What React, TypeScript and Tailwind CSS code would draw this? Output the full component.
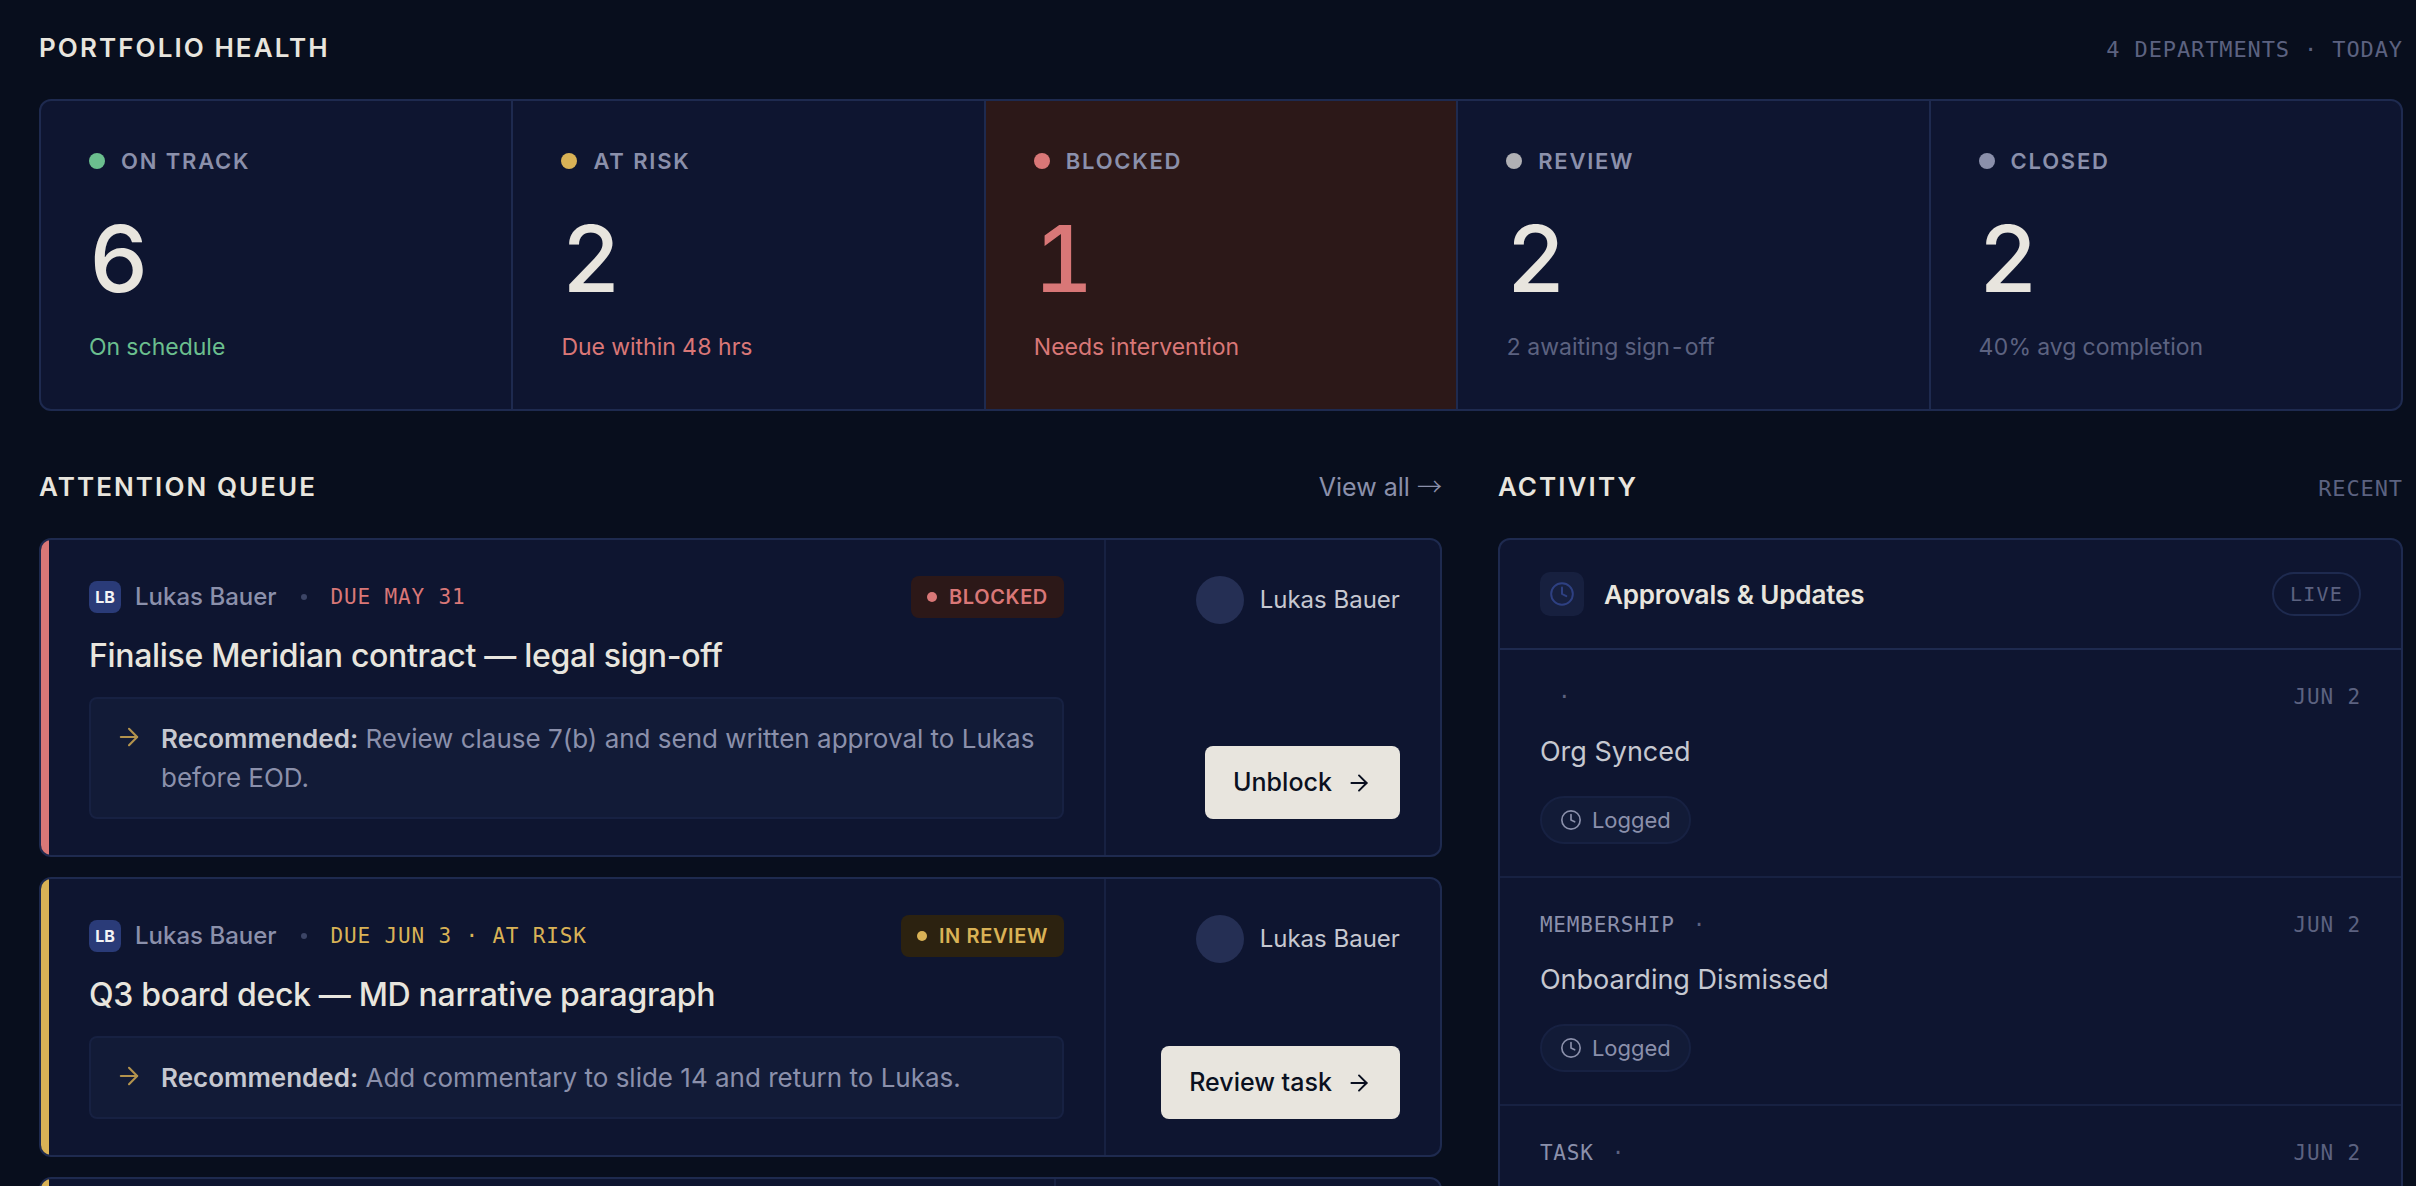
import { ArrowRight, Clock } from 'lucide-react';
import type { ReactNode } from 'react';

const HEALTH = [
  { label: 'On track', value: 6, note: 'On schedule', dot: 'bg-[#6bbf8e]', noteColor: 'text-[#6bbf8e]' },
  { label: 'At risk', value: 2, note: 'Due within 48 hrs', dot: 'bg-[#d9b256]', noteColor: 'text-[#d97777]' },
  { label: 'Blocked', value: 1, note: 'Needs intervention', dot: 'bg-[#d97777]', noteColor: 'text-[#d97777]', blocked: true },
  { label: 'Review', value: 2, note: '2 awaiting sign-off', dot: 'bg-[#b0b0b4]', noteColor: 'text-[#5c6280]' },
  { label: 'Closed', value: 2, note: '40% avg completion', dot: 'bg-[#8b90ab]', noteColor: 'text-[#5c6280]' },
];

const QUEUE = [
  {
    owner: 'Lukas Bauer',
    initials: 'LB',
    due: 'Due May 31',
    status: 'Blocked',
    title: 'Finalise Meridian contract — legal sign-off',
    recommendation: 'Review clause 7(b) and send written approval to Lukas before EOD.',
    action: 'Unblock',
    stripe: 'bg-[#d97777]',
    dueColor: 'text-[#d97777]',
    badge: 'bg-[#2c1818] text-[#d97777]',
  },
  {
    owner: 'Lukas Bauer',
    initials: 'LB',
    due: 'Due Jun 3 · At risk',
    status: 'In review',
    title: 'Q3 board deck — MD narrative paragraph',
    recommendation: 'Add commentary to slide 14 and return to Lukas.',
    action: 'Review task',
    stripe: 'bg-[#d9b256]',
    dueColor: 'text-[#d9b256]',
    badge: 'bg-[#2c2210] text-[#d9b256]',
  },
];

const ACTIVITY = [
  { module: '', title: 'Org Synced', date: 'Jun 2' },
  { module: 'Membership', title: 'Onboarding Dismissed', date: 'Jun 2' },
  { module: 'Task', title: '', date: 'Jun 2' },
];

function SectionHead({ title, children }: { title: string; children: ReactNode }) {
  return (
    <div className="mb-8 flex items-baseline justify-between">
      <h2 className="text-[26px] leading-[39px] font-semibold tracking-[0.08em] text-[#e8e5de] uppercase">{title}</h2>
      {children}
    </div>
  );
}

function MonoNote({ children }: { children: ReactNode }) {
  return (
    <span className="font-['DejaVu_Sans_Mono',monospace] text-[22px] leading-[30px] tracking-[0.04em] text-[#5c6280] uppercase">
      {children}
    </span>
  );
}

function QueueCard({ stripe, side, sideWidth, children }: { stripe: string; side?: ReactNode; sideWidth: string; children?: ReactNode }) {
  return (
    <article className="flex min-h-[280px] overflow-hidden rounded-xl border-2 border-[#1e2a4f] bg-[#0e1530]">
      <div className={`w-2 shrink-0 ${stripe}`} />
      <div className="min-w-0 flex-1 px-10 py-9">{children}</div>
      <div className={`flex shrink-0 flex-col items-end justify-between border-l-2 border-[#172142] px-10 py-9 ${sideWidth}`}>
        {side}
      </div>
    </article>
  );
}

function QueueItem({ item }: { item: (typeof QUEUE)[number] }) {
  return (
    <QueueCard
      stripe={item.stripe}
      sideWidth="min-w-[336px]"
      side={
        <>
          <div className="flex items-center gap-4 text-[24px] leading-9 text-[#c6c8d0]">
            <span className="size-12 rounded-full bg-[#252f54]" />
            {item.owner}
          </div>
          <button
            type="button"
            className="flex items-center gap-[14px] rounded-lg bg-[#e8e5de] px-7 py-[18px] text-[25px] leading-[37px] font-medium text-[#0a1020] hover:bg-white"
          >
            {item.action}
            <ArrowRight size={26} strokeWidth={1.8} />
          </button>
        </>
      }
    >
      <div className="flex items-center justify-between">
        <div className="flex items-center gap-6">
          <div className="flex items-center gap-[14px] text-[24px] leading-9 font-medium text-[#8b90ab]">
            <span className="flex size-8 items-center justify-center rounded-lg bg-[#2a3b78] text-[16px] leading-none font-bold text-[#f4f4f6]">
              {item.initials}
            </span>
            {item.owner}
          </div>
          <span className="size-[6px] rounded-full bg-[#3c4566]" />
          <span className={`font-['DejaVu_Sans_Mono',monospace] text-[21px] leading-[30px] tracking-[0.04em] uppercase ${item.dueColor}`}>
            {item.due}
          </span>
        </div>
        <span className={`flex items-center gap-3 rounded-lg px-4 py-[6px] text-[20px] leading-[30px] font-semibold tracking-[0.03em] uppercase ${item.badge}`}>
          <span className="size-[10px] rounded-full bg-current" />
          {item.status}
        </span>
      </div>
      <h3 className="mt-4 text-[32px] leading-[43px] font-medium tracking-[-0.01em] text-[#e8e5de]">{item.title}</h3>
      <div className="mt-5 flex gap-[18px] rounded-lg border-2 border-[#172142] bg-[#121b37] py-5 pr-5 pl-6">
        <ArrowRight size={28} strokeWidth={1.8} className="mt-1 shrink-0 text-[#b3934d]" />
        <p className="text-[26px] leading-[39px] text-[#8b90ab]">
          <strong className="font-semibold text-[#c6c8d0]">Recommended:</strong> {item.recommendation}
        </p>
      </div>
    </QueueCard>
  );
}

export default function App() {
  return (
    <main className="h-screen overflow-hidden bg-[#080e1d] pt-7 pr-[13px] pl-[39px] font-['Inter',sans-serif]">
      <section>
        <SectionHead title="Portfolio health">
          <MonoNote>4 departments · today</MonoNote>
        </SectionHead>
        <div className="grid grid-cols-5 gap-[2px] overflow-hidden rounded-xl border-2 border-[#1e2a4f] bg-[#1e2a4f] tabular-nums">
          {HEALTH.map((h) => (
            <div key={h.label} className={`px-12 py-11 ${h.blocked ? 'bg-[#2c1818]' : 'bg-[#0e1530]'}`}>
              <div className="flex items-center gap-4 text-[22px] leading-8 font-semibold tracking-[0.08em] text-[#8b90ab] uppercase">
                <span className={`size-4 rounded-full ${h.dot}`} />
                {h.label}
              </div>
              <div className={`mt-9 text-[92px] leading-none font-medium ${h.blocked ? 'text-[#d97777]' : 'text-[#e8e5de]'}`}>
                {h.value}
              </div>
              <div className={`mt-6 text-[23px] leading-9 ${h.noteColor}`}>{h.note}</div>
            </div>
          ))}
        </div>
      </section>

      <div className="mt-14 grid grid-cols-[1.55fr_1fr] items-start gap-14">
        <section>
          <SectionHead title="Attention queue">
            <a href="#queue" className="text-[25px] leading-[37px] text-[#8b90ab] hover:text-[#e8e5de]">
              View all <span className="font-['Noto_Sans_CJK_JP',sans-serif] leading-none font-light">→</span>
            </a>
          </SectionHead>
          <div id="queue" className="flex flex-col gap-5">
            {QUEUE.map((item) => (
              <QueueItem key={item.title} item={item} />
            ))}
            <QueueCard stripe="bg-[#d9b256]" sideWidth="w-[386px]" />
          </div>
        </section>

        <section>
          <SectionHead title="Activity">
            <MonoNote>Recent</MonoNote>
          </SectionHead>
          <div className="overflow-hidden rounded-xl border-2 border-[#1e2a4f] bg-[#0e1530]">
            <div className="flex items-center gap-5 border-b-2 border-[#1e2a4f] px-10 py-8">
              <span className="flex size-11 items-center justify-center rounded-[10px] bg-[#17203f] text-[#2e4082]">
                <Clock size={26} strokeWidth={1.8} />
              </span>
              <h3 className="flex-1 text-[26px] leading-[39px] font-semibold tracking-[-0.005em] text-[#e8e5de]">Approvals &amp; Updates</h3>
              <span className="rounded-full border-2 border-[#1e2a4f] px-4 py-[5px] font-['DejaVu_Sans_Mono',monospace] text-[20px] leading-[30px] tracking-[0.06em] text-[#5c6280]">
                LIVE
              </span>
            </div>
            <ul>
              {ACTIVITY.map((a) => (
                <li key={a.module} className="min-h-[228px] border-b-2 border-[#172142] px-10 py-8">
                  <div className="flex justify-between font-['DejaVu_Sans_Mono',monospace] text-[21px] leading-[30px] tracking-[0.04em] text-[#5c6280] uppercase">
                    <div className="flex gap-[18px]">
                      <span className="text-[#8b90ab]">{a.module}</span>
                      <span>·</span>
                    </div>
                    <time>{a.date}</time>
                  </div>
                  {a.title && (
                    <>
                      <p className="mt-5 text-[27px] leading-10 text-[#c6c8d0]">{a.title}</p>
                      <span className="mt-6 inline-flex h-12 items-center gap-[10px] rounded-full border-2 border-[#172142] bg-[#121b37] px-[18px] align-top text-[22px] text-[#8b90ab]">
                        <Clock size={22} strokeWidth={1.8} />
                        Logged
                      </span>
                    </>
                  )}
                </li>
              ))}
            </ul>
          </div>
        </section>
      </div>
    </main>
  );
}
